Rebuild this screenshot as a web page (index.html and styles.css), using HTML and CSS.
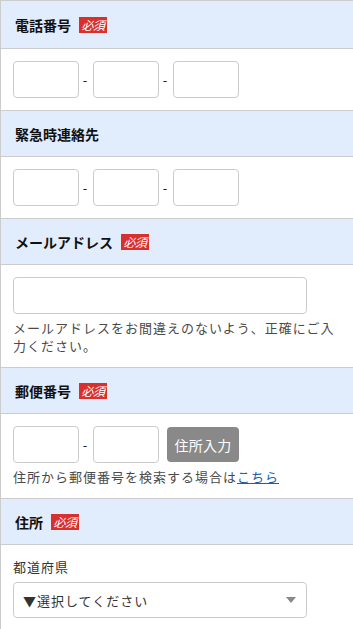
FILE: index.html
```html
<!DOCTYPE html>
<html lang="ja">
<head>
<meta charset="utf-8">
<title>フォーム</title>
<link rel="stylesheet" href="styles.css">
</head>
<body>
<div class="form">
  <section class="field">
    <div class="field-head first"><span class="label">電話番号</span><span class="req">必須</span></div>
    <div class="field-body">
      <div class="row">
        <input class="box short" type="text"><span class="dash">-</span><input class="box short" type="text"><span class="dash">-</span><input class="box short" type="text">
      </div>
    </div>
  </section>
  <section class="field">
    <div class="field-head"><span class="label">緊急時連絡先</span></div>
    <div class="field-body">
      <div class="row">
        <input class="box short" type="text"><span class="dash">-</span><input class="box short" type="text"><span class="dash">-</span><input class="box short" type="text">
      </div>
    </div>
  </section>
  <section class="field">
    <div class="field-head"><span class="label">メールアドレス</span><span class="req">必須</span></div>
    <div class="field-body">
      <input class="box wide" type="text">
      <p class="note">メールアドレスをお間違えのないよう、正確にご入力ください。</p>
    </div>
  </section>
  <section class="field">
    <div class="field-head"><span class="label">郵便番号</span><span class="req">必須</span></div>
    <div class="field-body">
      <div class="row">
        <input class="box short" type="text"><span class="dash">-</span><input class="box short" type="text"><button class="btn" type="button">住所入力</button>
      </div>
      <p class="note">住所から郵便番号を検索する場合は<a href="#" class="link">こちら</a></p>
    </div>
  </section>
  <section class="field">
    <div class="field-head"><span class="label">住所</span><span class="req">必須</span></div>
    <div class="field-body">
      <div class="sublabel">都道府県</div>
      <div class="select">
        <span class="select-text">▼選択してください</span>
        <span class="caret"></span>
      </div>
    </div>
  </section>
</div>
</body>
</html>
```
FILE: styles.css
```css
html, body {
  margin: 0;
  padding: 0;
  background: #fff;
}
body {
  font-family: "Noto Sans CJK JP", "Noto Sans", sans-serif;
  color: #222;
}
.form {
  border-left: 1px solid #cccccc;
  border-top: 1px solid #cccccc;
  width: 352px;
}
.field-head {
  height: 45px;
  background: #e1edfd;
  border-bottom: 1px solid #cccccc;
  display: flex;
  align-items: center;
  padding-left: 14px;
}
.field-head.first {
  height: 47px;
}
.field-body {
  padding: 12px 12px 12px;
  border-bottom: 1px solid #cccccc;
}
.label {
  font-size: 14px;
  font-weight: bold;
  color: #111;
}
.req {
  margin-left: 8px;
  width: 28px;
  height: 16px;
  background: #d9302e;
  color: #fff;
  font-size: 12px;
  font-style: italic;
  line-height: 16px;
  text-align: center;
  letter-spacing: -0.5px;
}
.row {
  display: flex;
  align-items: center;
}
.box {
  box-sizing: border-box;
  height: 37px;
  border: 1px solid #cccccc;
  border-radius: 4px;
  background: #fff;
  margin: 0;
  padding: 0 8px;
  font: inherit;
}
.short {
  width: 66px;
}
.wide {
  display: block;
  width: 294px;
}
.dash {
  width: 14px;
  padding-right: 2px;
  box-sizing: border-box;
  text-align: center;
  font-size: 13px;
  color: #222;
}
.btn {
  margin-left: 8px;
  box-sizing: border-box;
  width: 72px;
  height: 35px;
  border: none;
  border-radius: 4px;
  background: #898989;
  color: #fff;
  font-family: inherit;
  font-size: 14px;
  letter-spacing: 0.3px;
  padding: 0;
}
.note {
  margin: 5px 0 0;
  font-size: 13px;
  letter-spacing: 1px;
  line-height: 18px;
  color: #4a4a4a;
}
.link {
  color: #1b5fa8;
  text-decoration: underline;
}
.sublabel {
  font-size: 13px;
  letter-spacing: 1px;
  line-height: 18px;
  color: #333;
  margin-top: 1px;
}
.select {
  margin-top: 6px;
  box-sizing: border-box;
  width: 294px;
  height: 36px;
  border: 1px solid #cccccc;
  border-radius: 4px;
  display: flex;
  align-items: center;
  justify-content: space-between;
  padding: 0 10px 0 9px;
}
.select-text {
  font-size: 13px;
  letter-spacing: 1px;
  color: #333;
}
.caret {
  width: 0;
  height: 0;
  border-left: 5px solid transparent;
  border-right: 5px solid transparent;
  border-top: 6px solid #888;
}
```
